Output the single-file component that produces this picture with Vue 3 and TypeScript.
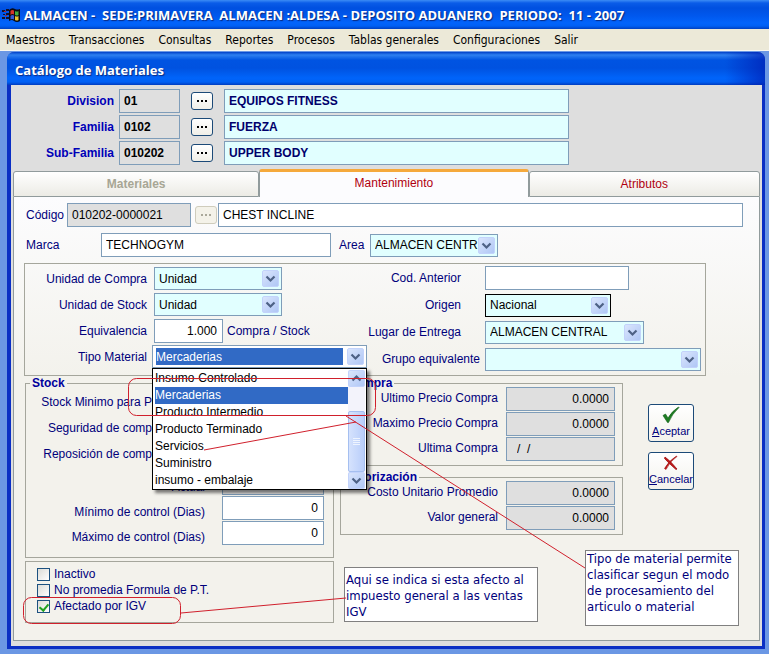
<script setup lang="ts">
import { ref } from 'vue'

interface Level { id: string; label: string; code: string; name: string }
interface Amount { id: string; label: string; value: string }

const menus: string[] = [
  'Maestros', 'Transacciones', 'Consultas', 'Reportes',
  'Procesos', 'Tablas generales', 'Configuraciones', 'Salir',
]

const levels: Level[] = [
  { id: 'division', label: 'Division', code: '01', name: 'EQUIPOS FITNESS' },
  { id: 'familia', label: 'Familia', code: '0102', name: 'FUERZA' },
  { id: 'subfamilia', label: 'Sub-Familia', code: '010202', name: 'UPPER BODY' },
]

const materialTypes: string[] = [
  'Insumo-Controlado', 'Mercaderias', 'Producto Intermedio',
  'Producto Terminado', 'Servicios', 'Suministro', 'insumo - embalaje',
]
const materialType = ref('Mercaderias')

const purchase: Amount[] = [
  { id: 'ultimo-precio', label: 'Ultimo Precio Compra', value: '0.0000' },
  { id: 'maximo-precio', label: 'Maximo Precio Compra', value: '0.0000' },
  { id: 'ultima-compra', label: 'Ultima Compra', value: '/  /' },
]
const valuation: Amount[] = [
  { id: 'costo-unitario', label: 'Costo Unitario Promedio', value: '0.0000' },
  { id: 'valor-general', label: 'Valor general', value: '0.0000' },
]

const inactive = ref(false)
const noAverage = ref(false)
const taxed = ref(true)
</script>

<template>
  <div class="app">
    <svg class="defs" aria-hidden="true">
      <defs>
        <linearGradient id="btn-face" x1="0" y1="0" x2="1" y2="1">
          <stop offset="0" stop-color="#dbe6fd" />
          <stop offset="1" stop-color="#aec6f5" />
        </linearGradient>
      </defs>
      <symbol id="drop" viewBox="0 0 17 17">
        <rect x="0.5" y="0.5" width="16" height="16" rx="1.5" fill="url(#btn-face)" stroke="#c3d3fb" />
        <path d="M4.5 6.5 L8.5 10.5 L12.5 6.5" fill="none" stroke="#4d6185" stroke-width="2.2" />
      </symbol>
      <symbol id="rise" viewBox="0 0 17 17">
        <rect x="0.5" y="0.5" width="16" height="16" rx="1.5" fill="url(#btn-face)" stroke="#c3d3fb" />
        <path d="M4.5 10.5 L8.5 6.5 L12.5 10.5" fill="none" stroke="#4d6185" stroke-width="2.2" />
      </symbol>
    </svg>

    <header class="titlebar">
      <svg class="flag" viewBox="0 0 18 16" aria-hidden="true">
        <path d="M0 3h3v2h-3zM1 7h2v1h-2zM0 10h3v2h-3zM4 2h3v2h-3zM4 6h3v2h-3zM4 10h3v2h-3z" fill="#101030" />
        <path d="M2 4h2v1h-2zM3 8h2v1h-2z" fill="#b02020" />
        <path d="M7 3 Q10 0 13 2 Q15 3 18 2 V14 Q15 16 12 14 Q10 12 7 14z" fill="#0a0a14" />
        <path d="M8.5 4 Q10 2.5 12 3.5 V7.5 Q10 6.5 8.5 8z" fill="#d8342a" />
        <path d="M13 4 Q15 5 16.5 4 V8 Q15 9 13 8z" fill="#3fae3c" />
        <path d="M8.5 9 Q10 7.5 12 8.5 V12.5 Q10 11.5 8.5 12.5z" fill="#3659d8" />
        <path d="M13 9 Q15 10 16.5 9 V13 Q15 14 13 13z" fill="#e9c432" />
      </svg>
      <h1>ALMACEN -&nbsp; SEDE:PRIMAVERA&nbsp; ALMACEN :ALDESA - DEPOSITO ADUANERO&nbsp; PERIODO:&nbsp; 11 - 2007</h1>
    </header>

    <nav class="menubar">
      <a v-for="m in menus" :key="m" href="#">{{ m }}</a>
    </nav>

    <main class="desktop">
      <section class="window">
        <h2>Catálogo de Materiales</h2>

        <div class="levels">
          <template v-for="l in levels" :key="l.id">
            <label :for="l.id">{{ l.label }}</label>
            <input :id="l.id" class="field grey" :value="l.code" readonly />
            <button type="button" class="dots" :aria-label="l.label"><i></i><i></i><i></i></button>
            <input class="field aqua" :value="l.name" :aria-label="l.label" readonly />
          </template>
        </div>

        <div class="tabs" role="tablist">
          <button type="button" role="tab" class="tab first" disabled>Materiales</button>
          <button type="button" role="tab" class="tab active" aria-selected="true">Mantenimiento</button>
          <button type="button" role="tab" class="tab last">Atributos</button>
        </div>

        <form class="panel" @submit.prevent>
          <div class="row code-row">
            <label for="codigo">Código</label>
            <input id="codigo" class="field grey code" value="010202-0000021" readonly />
            <button type="button" class="dots off" disabled aria-label="Código"><i></i><i></i><i></i></button>
            <input class="field grow" value="CHEST INCLINE" aria-label="Código" />
          </div>
          <div class="row brand-row">
            <label for="marca" class="brand-label">Marca</label>
            <input id="marca" class="field brand" value="TECHNOGYM" />
            <label for="area" class="area-label">Area</label>
            <span class="combo w128">
              <select id="area"><option>ALMACEN CENTR</option></select>
              <svg><use href="#drop" /></svg>
            </span>
          </div>

          <div class="box general">
            <div class="left">
              <label for="ucompra">Unidad de Compra</label>
              <span class="combo w128"><select id="ucompra"><option>Unidad</option></select><svg><use href="#drop" /></svg></span>
              <label for="ustock">Unidad de Stock</label>
              <span class="combo w128"><select id="ustock"><option>Unidad</option></select><svg><use href="#drop" /></svg></span>
              <label for="equiv">Equivalencia</label>
              <span class="equiv">
                <input id="equiv" class="field num" value="1.000" />
                <span>Compra / Stock</span>
              </span>
              <label for="tipo">Tipo Material</label>
              <div class="combo open">
                <select id="tipo" v-model="materialType">
                  <option v-for="t in materialTypes" :key="t">{{ t }}</option>
                </select>
                <svg><use href="#drop" /></svg>
                <div class="list">
                  <ul>
                    <li
                      v-for="t in materialTypes" :key="t"
                      :class="{ on: t === materialType }" @click="materialType = t"
                    >{{ t }}</li>
                  </ul>
                  <div class="scroll">
                    <svg><use href="#rise" /></svg>
                    <div class="thumb"><i></i><i></i><i></i><i></i></div>
                    <svg><use href="#drop" /></svg>
                  </div>
                </div>
              </div>
            </div>
            <div class="right">
              <label for="anterior" class="inset">Cod. Anterior</label>
              <input id="anterior" class="field w144" />
              <label for="origen" class="inset">Origen</label>
              <span class="combo w126 focus"><select id="origen"><option>Nacional</option></select><svg><use href="#drop" /></svg></span>
              <label for="lugar" class="inset">Lugar de Entrega</label>
              <span class="combo w159"><select id="lugar"><option>ALMACEN CENTRAL</option></select><svg><use href="#drop" /></svg></span>
              <label for="grupo">Grupo equivalente</label>
              <span class="combo"><select id="grupo"><option></option></select><svg><use href="#drop" /></svg></span>
            </div>
          </div>

          <div class="lower">
            <div class="col">
              <fieldset class="box stock">
                <legend>Stock</legend>
                <div class="policy">
                  <span>Stock Minimo para P</span>
                  <span>Seguridad de comp</span>
                  <span>Reposición de comp</span>
                </div>
                <div class="control">
                  <label for="actual">Actual</label>
                  <input id="actual" class="field grey" readonly />
                  <label for="minimo">Mínimo de control (Dias)</label>
                  <input id="minimo" class="field num" value="0" />
                  <label for="maximo">Máximo de control (Dias)</label>
                  <input id="maximo" class="field num" value="0" />
                </div>
              </fieldset>
              <div class="box checks">
                <label><input v-model="inactive" type="checkbox" />Inactivo</label>
                <label><input v-model="noAverage" type="checkbox" />No promedia Formula de P.T.</label>
                <label><input v-model="taxed" type="checkbox" />Afectado por IGV</label>
              </div>
            </div>

            <div class="col amounts">
              <fieldset class="box">
                <legend>Compra</legend>
                <div class="pairs">
                  <template v-for="a in purchase" :key="a.id">
                    <label :for="a.id">{{ a.label }}</label>
                    <input :id="a.id" class="field grey" :class="a.id === 'ultima-compra' ? 'date' : 'num'" :value="a.value" readonly />
                  </template>
                </div>
              </fieldset>
              <fieldset class="box">
                <legend>Valorización</legend>
                <div class="pairs">
                  <template v-for="a in valuation" :key="a.id">
                    <label :for="a.id">{{ a.label }}</label>
                    <input :id="a.id" class="field grey num" :value="a.value" readonly />
                  </template>
                </div>
              </fieldset>
            </div>

            <div class="actions">
              <button type="submit">
                <svg viewBox="0 0 18 18" aria-hidden="true">
                  <path d="M1 9.5 L3.5 8 L6 12 Q10 5 16.5 1 L17 1.5 Q10 8 6.5 16.5 H5.5z" fill="#1d7d22" stroke="#0d5a14" stroke-width="0.6" />
                </svg>
                <span><u>A</u>ceptar</span>
              </button>
              <button type="button">
                <svg viewBox="0 0 18 18" aria-hidden="true">
                  <path d="M3 3 Q8 6.5 15 15 L14 15.5 Q7 9.5 2.5 4.5z" fill="#c01818" stroke="#a01010" stroke-width="0.8" />
                  <path d="M15 2.5 Q8 7 4 15.5 L2.5 14.5 Q7 6.5 14.5 2z" fill="#c01818" stroke="#a01010" stroke-width="0.6" />
                </svg>
                <span><u>C</u>ancelar</span>
              </button>
            </div>
          </div>
        </form>
      </section>
    </main>

    <div class="notes">
      <p class="note tax">Aqui se indica si esta afecto al impuesto general a las ventas IGV</p>
      <p class="note type">Tipo de material permite clasificar segun el modo de procesamiento del articulo o material</p>
      <svg width="769" height="654" aria-hidden="true">
        <g fill="none" stroke="#d0202c" stroke-width="1">
          <rect x="128.5" y="378.5" width="247" height="37" rx="8" />
          <rect x="23.5" y="597.5" width="157" height="26" rx="8" />
          <path d="M204 450 L356 422 M346 416 L585 568 M181 613 L346 598" />
        </g>
      </svg>
    </div>
  </div>
</template>

<style>
body {
  margin: 0;
}
</style>

<style scoped>
* {
  box-sizing: border-box;
}
.app {
  position: relative;
  display: flex;
  flex-direction: column;
  min-height: 100vh;
  overflow: hidden;
  background: #6b97e4;
  color: #00007b;
  font: 12px/14px "Liberation Sans", Arial, sans-serif;
}
.defs {
  position: absolute;
  width: 0;
  height: 0;
}
input, select, button {
  margin: 0;
  font: inherit;
  color: inherit;
}
.titlebar {
  display: flex;
  align-items: center;
  gap: 4px;
  height: 29px;
  padding-left: 2px;
  background: linear-gradient(#3c8cf5 0, #0a5ce8 3px, #0050e0 8px, #0058ee 16px, #0264fb 23px, #0060f4 26px, #0040c0 29px);
}
.flag {
  width: 18px;
  height: 16px;
}
h1, h2 {
  margin: 0;
  color: #fff;
  font: bold 13px/16px "Open Sans", "Trebuchet MS", sans-serif;
  text-shadow: 1px 1px 1px #0a2a80;
  white-space: nowrap;
}
.menubar {
  display: flex;
  gap: 14px;
  height: 22px;
  padding: 3px 6px;
  background: #ece9d8;
  border-bottom: 1px solid #f8f7f0;
}
.menubar a {
  color: #000;
  font: 12px/16px "DejaVu Sans Condensed", Tahoma, sans-serif;
  text-decoration: none;
  white-space: nowrap;
}
.desktop {
  display: flex;
  flex: 1;
  padding: 1px 4px 5px 7px;
}
.window {
  display: flex;
  flex: 1;
  flex-direction: column;
  min-width: 0;
  border: solid #0a2fc4;
  border-width: 0 3px 3px 4px;
  border-radius: 8px 8px 0 0;
  background: #dedede;
}
h2 {
  height: 33px;
  margin: 0 -3px 0 -4px;
  padding: 10px 8px 7px;
  border-radius: 7px 7px 0 0;
  background:
    linear-gradient(90deg, transparent calc(100% - 40px), rgba(0, 30, 180, 0.7)),
    linear-gradient(#0040c8 0, #2f80f0 3px, #0054e2 8px, #0052e0 16px, #0064fa 26px, #0060f4 30px, #003cc0 33px);
}
.levels {
  display: grid;
  grid-template-columns: 97px 61px 22px minmax(0, 1fr);
  grid-auto-rows: 24px;
  gap: 2px 11px;
  align-items: center;
  padding: 4px 193px 4px 0;
  color: #0000b8;
  font-weight: bold;
}
.levels label {
  margin-right: -6px;
  text-align: right;
}
.levels .aqua {
  color: #00006b;
}
.field {
  min-width: 0;
  height: 24px;
  padding: 0 4px;
  border: 1px solid #7f9db9;
  border-radius: 0;
  background: #fff;
  color: #000;
  outline: none;
}
.field.grey {
  background: #dfdfdf;
}
.field.aqua {
  background: #e1ffff;
}
.field.num {
  padding-right: 5px;
  text-align: right;
}
.field.date {
  padding-left: 10px;
}
.dots {
  display: flex;
  align-items: center;
  justify-content: center;
  gap: 2px;
  flex: none;
  width: 22px;
  height: 18px;
  padding: 0;
  border: 1px solid #1c4a78;
  border-radius: 3px;
  background: linear-gradient(#fff, #f0efe8);
}
.dots i {
  width: 2px;
  height: 2px;
  background: #000;
}
.dots.off {
  border-color: #cfccbc;
  background: #f4f2e9;
}
.dots.off i {
  background: #aaa89a;
}
.tabs {
  display: flex;
  align-items: flex-end;
  height: 28px;
  padding: 0 2px;
}
.tab {
  height: 26px;
  padding: 0;
  border: 1px solid #919b9c;
  border-radius: 3px 3px 0 0;
  background: linear-gradient(#fff, #ecebe5);
  color: #b00010;
}
.tab.first {
  flex: 246;
  color: #a7a695;
  font-weight: bold;
}
.tab.active {
  flex: 269;
  height: 28px;
  padding-bottom: 4px;
  border-top: 3px solid #f5a93c;
  border-bottom: 0;
  background: #fcfcfe;
}
.tab.last {
  flex: 231;
}
.panel {
  flex: 1;
  margin: 0 2px 5px;
  padding: 6px 16px 0 10px;
  border: 1px solid #919b9c;
  border-top: 0;
  background: linear-gradient(#fcfcfe, #f3f2ec 180px);
}
.row {
  display: flex;
  align-items: center;
  height: 24px;
  margin-bottom: 6px;
  padding-left: 2px;
}
.code-row label {
  width: 41px;
}
.code {
  width: 124px;
}
.code-row .dots {
  margin: 0 1px 0 4px;
}
.grow {
  flex: 1;
}
.brand-label {
  width: 75px;
}
.brand {
  width: 230px;
}
.area-label {
  width: 39px;
  padding-left: 8px;
}
.combo {
  position: relative;
  display: block;
  height: 23px;
}
.combo select {
  display: block;
  width: 100%;
  height: 100%;
  padding: 0 18px 0 4px;
  border: 1px solid #7f9db9;
  border-radius: 0;
  background: #e1ffff;
  color: #000;
  appearance: none;
  outline: none;
}
.combo > svg {
  position: absolute;
  top: 3px;
  right: 3px;
  width: 17px;
  height: 17px;
  pointer-events: none;
}
.combo.focus select {
  border-color: #000;
}
.w126 {
  width: 126px;
}
.w128 {
  width: 128px;
}
.w144 {
  width: 144px;
}
.w159 {
  width: 159px;
}
.box {
  min-width: 0;
  margin: 0;
  padding: 0;
  border: 1px solid #a5a69c;
}
.general {
  display: grid;
  grid-template-columns: 342px minmax(0, 1fr);
  height: 113px;
  margin-right: 37px;
  padding: 2px 4px 0 0;
}
.left, .right {
  display: grid;
  align-content: start;
  align-items: center;
}
.left {
  grid-template-columns: 122px minmax(0, 1fr);
  grid-auto-rows: 23px;
  gap: 3px 7px;
  padding-top: 1px;
}
.right {
  grid-template-columns: 113px minmax(0, 1fr);
  grid-auto-rows: 24px;
  gap: 3px 5px;
}
.left label, .right label {
  text-align: right;
  white-space: nowrap;
}
.right label.inset {
  padding-right: 19px;
}
.equiv {
  display: flex;
  align-items: center;
  gap: 4px;
}
.equiv .field {
  width: 69px;
}
.combo.open {
  margin-left: -2px;
}
.combo.open select {
  padding-left: 3px;
  background: linear-gradient(#316ac5, #316ac5) 3px 2px / calc(100% - 26px) 17px no-repeat #fff;
  color: #fff;
}
.list {
  position: absolute;
  z-index: 2;
  top: 23px;
  left: 0;
  right: 0;
  display: flex;
  padding: 1px 1px 0 2px;
  border: 1px solid #000;
  background: #fff;
  box-shadow: 3px 3px 3px rgba(0, 0, 0, 0.5);
  color: #000;
}
.list ul {
  flex: 1;
  margin: 0;
  padding: 0;
  list-style: none;
}
.list li {
  height: 17px;
  line-height: 17px;
}
.list li.on {
  background: #316ac5;
  color: #fff;
}
.scroll {
  display: flex;
  flex-direction: column;
  width: 17px;
  background: #f3f3fb;
}
.scroll svg {
  width: 17px;
  height: 17px;
}
.thumb {
  display: flex;
  flex-direction: column;
  align-items: center;
  justify-content: center;
  gap: 1px;
  height: 61px;
  margin-top: auto;
  border: 1px solid #a5bff0;
  border-radius: 2px;
  background: linear-gradient(90deg, #d5e2fd, #b9cefa);
}
.thumb i {
  width: 7px;
  height: 1px;
  background: #eef4ff;
}
.lower {
  display: grid;
  grid-template-columns: 309px 283px 46px;
  padding: 2px 0 0 1px;
}
.amounts {
  padding-left: 6px;
  width: 289px;
}
legend {
  margin: 0 0 -1px 4px;
  padding: 0 2px;
  color: #00009c;
  font-weight: bold;
  line-height: 10px;
}
.policy {
  display: grid;
  grid-auto-rows: 24px;
  row-gap: 2px;
  align-items: center;
  width: 126px;
  height: 84px;
  padding-top: 3px;
  text-align: right;
  white-space: nowrap;
}
.control {
  display: grid;
  grid-template-columns: 179px minmax(0, 1fr);
  gap: 1px 17px;
  padding: 0 9px 12px 0;
}
.control label {
  padding-top: 9px;
  text-align: right;
}
.checks {
  display: grid;
  gap: 2px;
  height: 62px;
  margin-top: 3px;
  padding: 5px 11px;
  align-content: start;
}
.checks label {
  display: flex;
  align-items: center;
  gap: 4px;
}
.checks input {
  position: relative;
  width: 13px;
  height: 13px;
  border: 1px solid #1c5180;
  background: linear-gradient(135deg, #dcdcd7, #fff);
  appearance: none;
}
.checks input:checked::after {
  content: "";
  position: absolute;
  top: 1px;
  left: 3px;
  width: 4px;
  height: 7px;
  border: solid #21a121;
  border-width: 0 2px 2px 0;
  transform: rotate(40deg);
}
.amounts .box {
  margin-bottom: 6px;
}
.pairs {
  display: grid;
  grid-template-columns: 157px minmax(0, 1fr);
  gap: 1px 8px;
  align-items: center;
  padding: 0 7px 4px 0;
}
.pairs label {
  padding-bottom: 2px;
  text-align: right;
}
.actions {
  display: flex;
  flex-direction: column;
  gap: 10px;
  padding: 26px 0 0;
  margin-left: 31px;
}
.actions button {
  display: flex;
  flex-direction: column;
  align-items: center;
  width: 46px;
  height: 38px;
  padding: 1px 0 0;
  border: 1px solid #1c4a78;
  border-radius: 3px;
  background: linear-gradient(#fff, #f3f2ec);
}
.actions svg {
  width: 18px;
  height: 18px;
}
.actions span {
  font-size: 11px;
}
.notes {
  position: absolute;
  z-index: 5;
  top: 0;
  left: 0;
  pointer-events: none;
}
.notes svg {
  position: absolute;
  top: 0;
  left: 0;
}
.note {
  position: absolute;
  margin: 0;
  padding: 0 6px 0 1px;
  border: 1px solid #808080;
  background: #fff;
  font: 13px/16px "DejaVu Sans Condensed", Tahoma, sans-serif;
}
.note.tax {
  top: 567px;
  left: 344px;
  width: 194px;
  height: 55px;
  padding-top: 4px;
}
.note.type {
  top: 550px;
  left: 585px;
  width: 154px;
  height: 76px;
}
</style>
